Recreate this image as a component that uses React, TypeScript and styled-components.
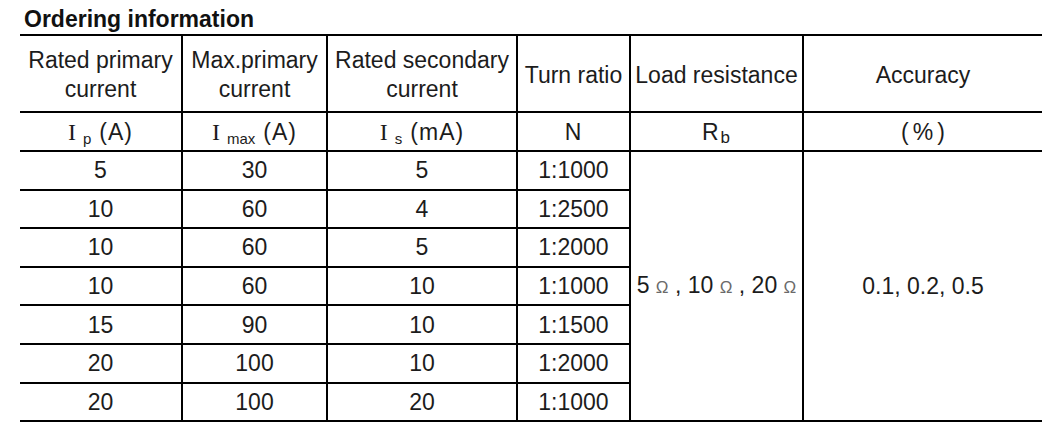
import styled, { createGlobalStyle } from 'styled-components';

const GlobalStyle = createGlobalStyle`
  html, body {
    margin: 0;
    padding: 0;
    background: #ffffff;
  }
  body {
    font-family: 'Liberation Sans', Arial, sans-serif;
    color: #1c1c1c;
  }
`;

// Styles
const Page = styled.main`
  width: 1060px;
  height: 443px;
  padding: 6px 0 0 20px;
  box-sizing: border-box;
  overflow: hidden;
`;

const Title = styled.h2`
  margin: 0 0 2px 4px;
  font-size: 23px;
  line-height: 26px;
  font-weight: 700;
  color: #111;
`;

const Table = styled.table`
  width: 1022px;
  table-layout: fixed;
  border-collapse: collapse;
  font-size: 23px;

  td {
    border: 2px solid #000;
    padding: 0;
    text-align: center;
    vertical-align: middle;
    white-space: nowrap;
  }

  td:first-child {
    border-left: none;
  }

  td:last-child {
    border-right: none;
  }
`;

const Row = styled.tr<{ $h: number }>`
  height: ${(p) => p.$h}px;
`;

const HeadCell = styled.td`
  line-height: 29px;
  padding-top: 3px !important;
`;

const UnitCell = styled.td`
  line-height: 26px;
  letter-spacing: 1px;
`;

const Serif = styled.span`
  font-family: 'Liberation Serif', 'Times New Roman', serif;
  font-size: 24px;
`;

const Sub = styled.sub`
  font-size: 15px;
  vertical-align: -4px;
  line-height: 0;
  margin: 0 8px 0 6px;
  letter-spacing: 0;
`;

const Tight = styled.sub`
  font-size: 17px;
  vertical-align: -3px;
  line-height: 0;
  margin-left: 1px;
`;

const Wide = styled.span`
  letter-spacing: 4px;
  margin-right: -4px;
`;

const Cell = styled.td`
  line-height: 26px;
`;

const Ohm = styled.span`
  font-size: 17px;
  color: #6a6a6a;
`;

type DataRow = [string, string, string, string];

const rows: DataRow[] = [
  ['5', '30', '5', '1:1000'],
  ['10', '60', '4', '1:2500'],
  ['10', '60', '5', '1:2000'],
  ['10', '60', '10', '1:1000'],
  ['15', '90', '10', '1:1500'],
  ['20', '100', '10', '1:2000'],
  ['20', '100', '20', '1:1000'],
];

const widths = [162, 145, 190, 113, 173, 239];

const App = () => {
  return (
    <>
      <GlobalStyle />
      <Page>
        <Title>Ordering information</Title>
        <Table>
          <colgroup>
            {widths.map((w, i) => (
              <col key={i} style={{ width: w }} />
            ))}
          </colgroup>
          <tbody>
            <Row $h={77}>
              <HeadCell>
                Rated primary
                <br />
                current
              </HeadCell>
              <HeadCell>
                Max.primary
                <br />
                current
              </HeadCell>
              <HeadCell>
                Rated secondary
                <br />
                current
              </HeadCell>
              <HeadCell>Turn ratio</HeadCell>
              <HeadCell>Load resistance</HeadCell>
              <HeadCell>Accuracy</HeadCell>
            </Row>
            <Row $h={39}>
              <UnitCell>
                <Serif>I</Serif>
                <Sub>p</Sub>(A)
              </UnitCell>
              <UnitCell>
                <Serif>I</Serif>
                <Sub>max</Sub>(A)
              </UnitCell>
              <UnitCell>
                <Serif>I</Serif>
                <Sub>s</Sub>(mA)
              </UnitCell>
              <UnitCell>N</UnitCell>
              <UnitCell>
                R<Tight>b</Tight>
              </UnitCell>
              <UnitCell>
                <Wide>(%)</Wide>
              </UnitCell>
            </Row>
            {rows.map((r, i) => (
              <Row $h={38.6} key={i}>
                {r.map((v, j) => (
                  <Cell key={j}>{v}</Cell>
                ))}
                {i === 0 && (
                  <>
                    <Cell rowSpan={rows.length}>
                      5 <Ohm>Ω</Ohm> , 10 <Ohm>Ω</Ohm> , 20 <Ohm>Ω</Ohm>
                    </Cell>
                    <Cell rowSpan={rows.length}>0.1, 0.2, 0.5</Cell>
                  </>
                )}
              </Row>
            ))}
          </tbody>
        </Table>
      </Page>
    </>
  );
};

export default App;
